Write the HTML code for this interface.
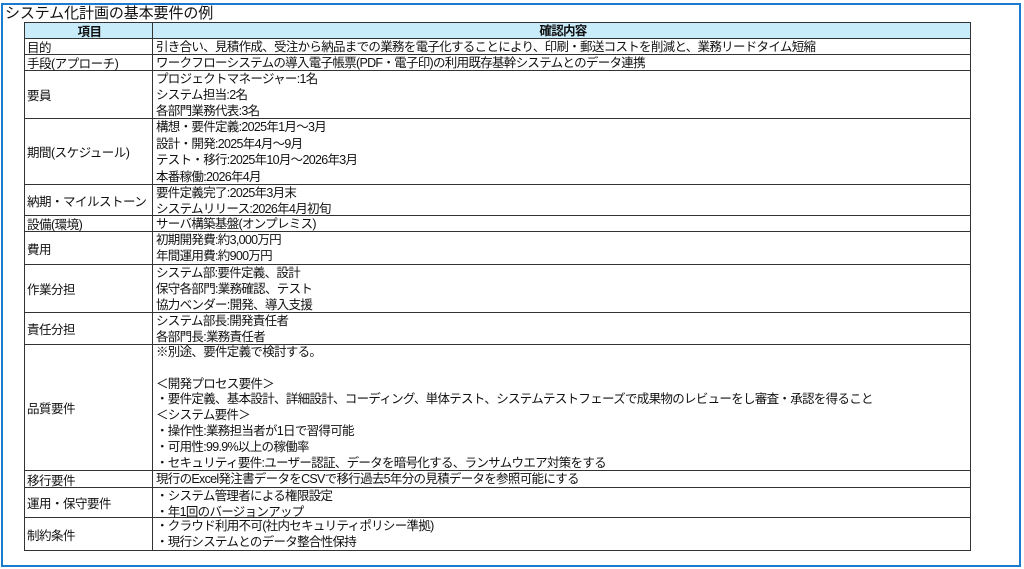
<!DOCTYPE html>
<html><head><meta charset="utf-8"><style>
*{margin:0;padding:0;box-sizing:border-box}
body{width:1024px;height:569px;background:#fff;position:relative;overflow:hidden;font-family:"Liberation Sans","Noto Sans CJK JP",sans-serif;color:#111}
.frame{position:absolute;left:1px;top:3px;width:1020px;height:564px;border:2.5px solid #1a7bd0}
.title{position:absolute;left:5px;top:5px;font-size:15px;line-height:17px;letter-spacing:-0.1px}
.r{position:absolute;left:24px;width:947px;border:1px solid #333;border-top:none}
.l{position:absolute;left:0;top:0;bottom:0;width:128px;border-right:1px solid #333;font-size:12.5px;display:flex;align-items:center;padding-left:2px;white-space:nowrap;letter-spacing:-0.5px}
.c{position:absolute;left:129px;top:0;right:0;font-size:12.5px;line-height:16px;padding-left:2px;white-space:nowrap;letter-spacing:-0.7px}
.h{background:#c9ecfb;border-top:1px solid #333;font-weight:bold}
.h .l,.h .c{justify-content:center;text-align:center;font-weight:bold}
</style></head><body>
<div class="frame"></div>
<div class="title">システム化計画の基本要件の例</div>
<div class="r h" style="top:22px;height:17px"><div class="l">項目</div><div class="c" style="top:0">確認内容</div></div>
<div class="r" style="top:39px;height:16px"><div class="l">目的</div><div class="c">引き合い、見積作成、受注から納品までの業務を電子化することにより、印刷・郵送コストを削減と、業務リードタイム短縮</div></div>
<div class="r" style="top:55px;height:16px"><div class="l">手段(アプローチ)</div><div class="c">ワークフローシステムの導入電子帳票(PDF・電子印)の利用既存基幹システムとのデータ連携</div></div>
<div class="r" style="top:71px;height:48px"><div class="l">要員</div><div class="c">プロジェクトマネージャー:1名<br>システム担当:2名<br>各部門業務代表:3名</div></div>
<div class="r" style="top:119px;height:66px"><div class="l">期間(スケジュール)</div><div class="c" style="line-height:16.5px">構想・要件定義:2025年1月～3月<br>設計・開発:2025年4月～9月<br>テスト・移行:2025年10月～2026年3月<br>本番稼働:2026年4月</div></div>
<div class="r" style="top:185px;height:31px"><div class="l">納期・マイルストーン</div><div class="c">要件定義完了:2025年3月末<br>システムリリース:2026年4月初旬</div></div>
<div class="r" style="top:216px;height:16px"><div class="l">設備(環境)</div><div class="c">サーバ構築基盤(オンプレミス)</div></div>
<div class="r" style="top:232px;height:33px"><div class="l">費用</div><div class="c">初期開発費:約3,000万円<br>年間運用費:約900万円</div></div>
<div class="r" style="top:265px;height:48px"><div class="l">作業分担</div><div class="c">システム部:要件定義、設計<br>保守各部門:業務確認、テスト<br>協力ベンダー:開発、導入支援</div></div>
<div class="r" style="top:313px;height:32px"><div class="l">責任分担</div><div class="c">システム部長:開発責任者<br>各部門長:業務責任者</div></div>
<div class="r" style="top:345px;height:126px"><div class="l">品質要件</div><div class="c" style="line-height:15.8px">※別途、要件定義で検討する。<br><br>＜開発プロセス要件＞<br>・要件定義、基本設計、詳細設計、コーディング、単体テスト、システムテストフェーズで成果物のレビューをし審査・承認を得ること<br>＜システム要件＞<br>・操作性:業務担当者が1日で習得可能<br>・可用性:99.9%以上の稼働率<br>・セキュリティ要件:ユーザー認証、データを暗号化する、ランサムウエア対策をする</div></div>
<div class="r" style="top:471px;height:17px"><div class="l">移行要件</div><div class="c">現行のExcel発注書データをCSVで移行過去5年分の見積データを参照可能にする</div></div>
<div class="r" style="top:488px;height:30px"><div class="l">運用・保守要件</div><div class="c">・システム管理者による権限設定<br>・年1回のバージョンアップ</div></div>
<div class="r" style="top:518px;height:33px"><div class="l">制約条件</div><div class="c">・クラウド利用不可(社内セキュリティポリシー準拠)<br>・現行システムとのデータ整合性保持</div></div>
</body></html>
